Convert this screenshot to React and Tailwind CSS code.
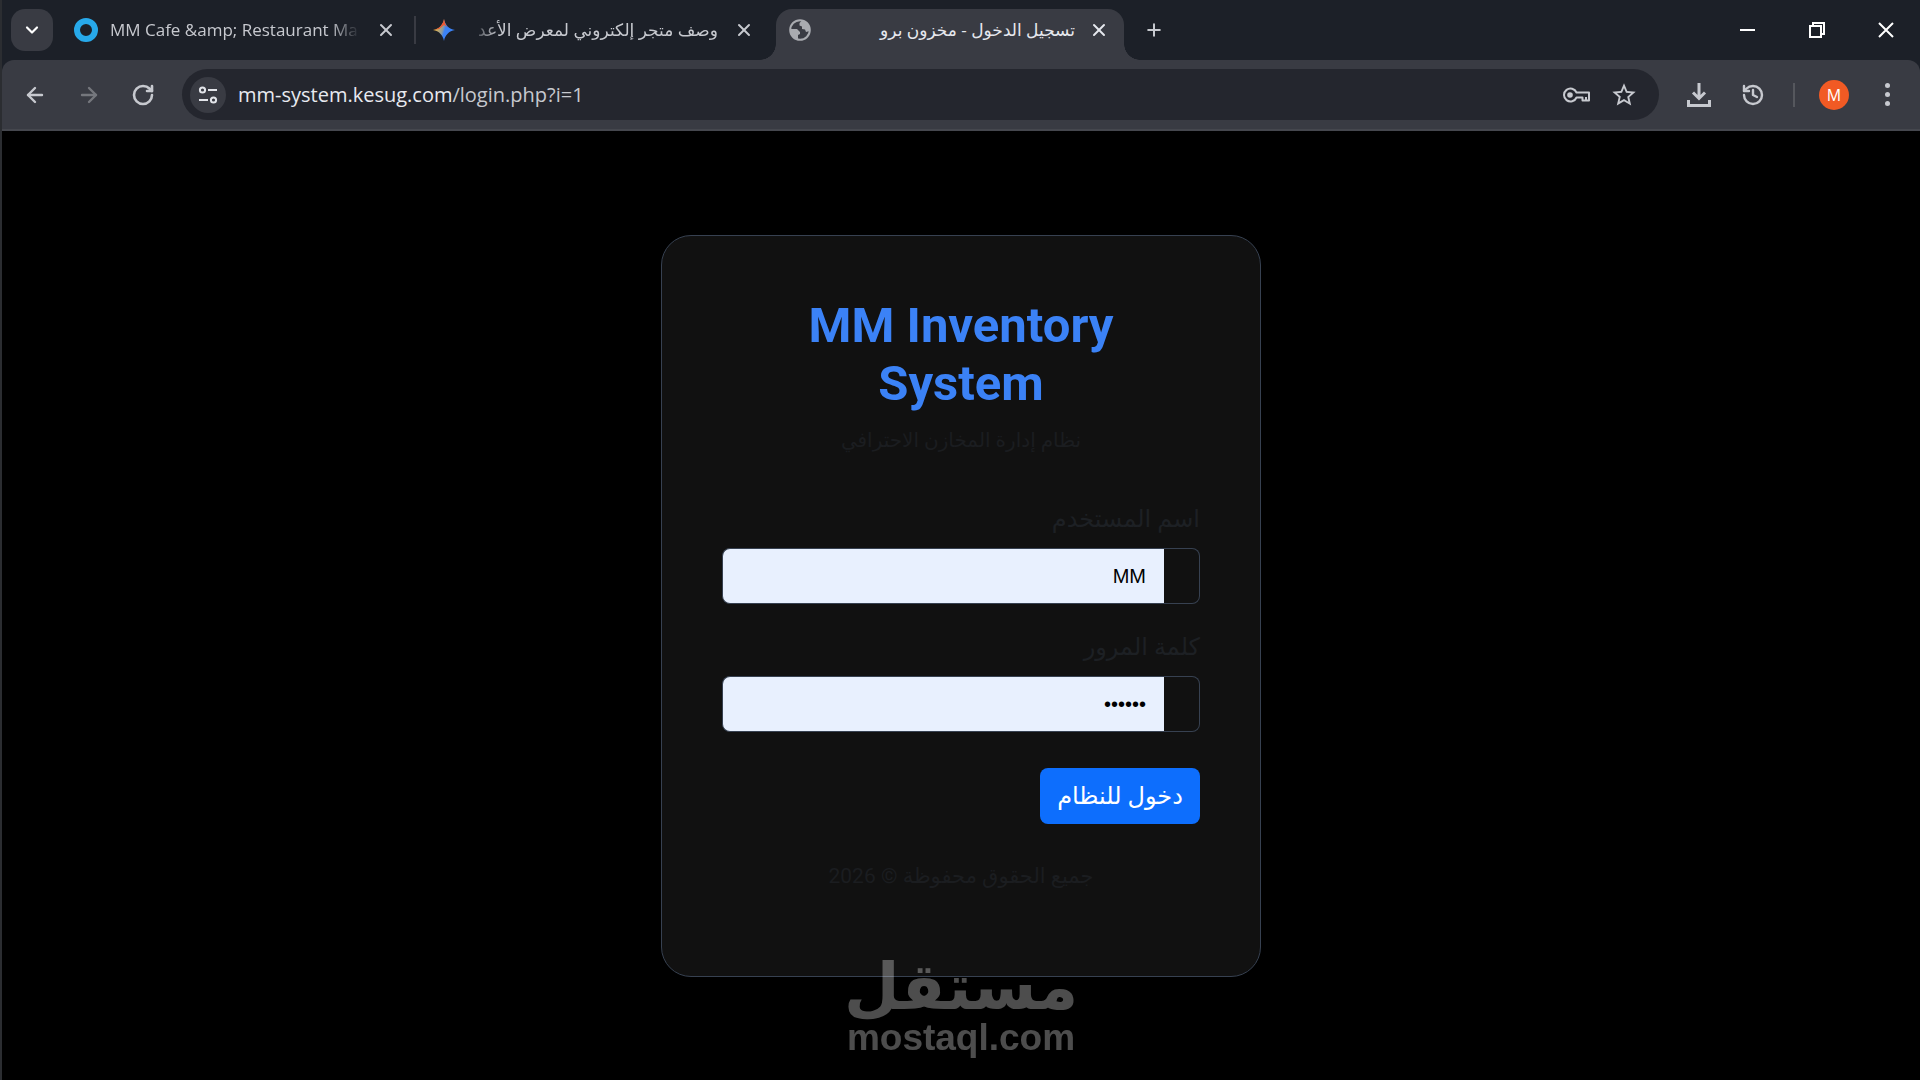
import { useState } from 'react';
import { ArrowLeft, ArrowRight, ChevronDown, History, Plus, RotateCw, X } from 'lucide-react';
import { MdStarBorder } from 'react-icons/md';

function GeminiIcon() {
  return (
    <svg viewBox="0 0 24 24" className="size-6 shrink-0">
      <defs>
        <linearGradient id="spark" x1="0" y1="0.3" x2="1" y2="0.6">
          <stop offset="0.1" stopColor="#f2b53a" />
          <stop offset="0.45" stopColor="#8a9aa0" />
          <stop offset="0.55" stopColor="#3b82f6" />
          <stop offset="1" stopColor="#3b82f6" />
        </linearGradient>
      </defs>
      <path d="M12 1c1 6 5 10 11 11-6 1-10 5-11 11-1-6-5-10-11-11 6-1 10-5 11-11Z" fill="url(#spark)" />
      <path d="M12 1c1 6 3 8 5 9l-5-3-5 4-6 1c6-1 10-5 11-11Z" fill="#f0562f" />
    </svg>
  );
}

function GlobeIcon() {
  return (
    <svg viewBox="0 0 24 24" className="ml-3 size-6 shrink-0 text-[#a9abb0]">
      <circle cx="12" cy="12" r="9.8" fill="none" stroke="currentColor" strokeWidth="2" />
      <path
        d="M14 2.500 11.500 5v2.500l2.500 1v2.500l3 .5 1 2.500 3.500-1 .5-3-2.500-5Z M2 11h7l3 3v2l-2 1v4.500l-4-1.500-3.500-4Z"
        fill="currentColor"
      />
    </svg>
  );
}

function TuneIcon() {
  return (
    <svg viewBox="0 0 20 20" className="size-5" fill="none" stroke="#e3e5ea" strokeWidth="2">
      <circle cx="4.5" cy="5" r="2.6" />
      <path d="M10 5h9M1 15h9" />
      <circle cx="15.5" cy="15" r="2.6" />
    </svg>
  );
}

function KeyIcon() {
  return (
    <svg viewBox="0 0 28 20" className="h-5 w-7" fill="none" stroke="currentColor" strokeWidth="2">
      <path d="M14.500 7.500h12.500v8h-6.500v-3h-6a6.500 6.500 0 1 1 0-5Z" strokeLinejoin="round" />
      <path d="M24 12v3" />
      <circle cx="8" cy="10" r="2.800" fill="currentColor" stroke="none" />
    </svg>
  );
}

function TabTitle({ children, rtl, className }) {
  return (
    <span dir={rtl ? 'rtl' : 'ltr'} className={`h-7 overflow-hidden whitespace-nowrap text-[17px] leading-7 ${className}`}>
      {children}
    </span>
  );
}

function CloseTab() {
  return (
    <button aria-label="Close tab" className="flex size-6 shrink-0 items-center justify-center">
      <X className="size-5" strokeWidth={2.4} />
    </button>
  );
}

function TabStrip() {
  return (
    <div className="flex h-15 items-center bg-[#1c2028] text-[#c7c9cf]">
      <button aria-label="Search tabs" className="ml-[9px] flex size-[42px] items-center justify-center rounded-[14px] bg-[#393b43] text-white">
        <ChevronDown className="size-5" strokeWidth={2.6} />
      </button>

      <div className="ml-[21px] flex w-[342px] items-center border-r-2 border-[#393b43]">
        <span className="size-6 shrink-0 rounded-full border-[6px] border-[#27a9ea]" />
        <TabTitle className="ml-3 w-[250px] mask-r-from-88%">MM Cafe &amp;amp; Restaurant Ma</TabTitle>
        <span className="ml-3.5 flex"><CloseTab /></span>
      </div>

      <div className="ml-4 flex w-[344px] items-center">
        <GeminiIcon />
        <TabTitle rtl className="ml-3 w-[250px] mask-l-from-88%">وصف متجر إلكتروني لمعرض الأعد</TabTitle>
        <span className="ml-3.5 flex"><CloseTab /></span>
      </div>

      <div className="relative mt-[9px] flex h-[51px] w-[348px] items-center rounded-t-2xl bg-[#393b43] pb-[9px] text-[#e6e8ee]">
        <span className="absolute -left-4 bottom-0 size-4 bg-[radial-gradient(circle_at_0_0,transparent_15.5px,#393b43_16px)]" />
        <span className="absolute -right-4 bottom-0 size-4 bg-[radial-gradient(circle_at_100%_0,transparent_15.5px,#393b43_16px)]" />
        <GlobeIcon />
        <TabTitle rtl className="ml-3 w-[251px]">تسجيل الدخول - مخزون برو</TabTitle>
        <span className="ml-3 flex"><CloseTab /></span>
      </div>

      <button aria-label="New tab" className="ml-[18px] flex size-6 items-center justify-center">
        <Plus className="size-5" strokeWidth={2.4} />
      </button>

      <div className="ml-auto flex h-full text-white">
        <button aria-label="Minimize" className="flex w-[69px] items-center justify-center">
          <span className="h-0.5 w-[15px] bg-white" />
        </button>
        <button aria-label="Restore" className="flex w-[69px] items-center justify-center">
          <svg viewBox="0 0 16 16" className="size-4" fill="none" stroke="currentColor" strokeWidth="2">
            <path d="M4 4V1h11v11h-3M1 4h11v11H1Z" />
          </svg>
        </button>
        <button aria-label="Close" className="flex w-[69px] items-center justify-center">
          <svg viewBox="0 0 16 16" className="size-4" fill="none" stroke="currentColor" strokeWidth="2">
            <path d="M1 1l14 14M15 1L1 15" />
          </svg>
        </button>
      </div>
    </div>
  );
}

function Toolbar() {
  return (
    <div className="bg-[#1c2028]">
      <div className="flex h-[71px] items-center rounded-t-xl border-b-2 border-[#45474e] bg-[#393b43] text-[#c7c9cf]">
        <div className="flex w-[180px] items-center gap-[30px] pl-[21px]">
          <button aria-label="Back"><ArrowLeft className="size-6" strokeWidth={2.4} /></button>
          <button aria-label="Forward" className="text-[#75777d]"><ArrowRight className="size-6" strokeWidth={2.4} /></button>
          <button aria-label="Reload"><RotateCw className="size-6" strokeWidth={2.6} /></button>
        </div>

        <div className="flex h-[51px] flex-1 items-center rounded-full bg-[#24262e] pl-2 pr-[21px]">
          <button aria-label="Site information" className="flex size-9 items-center justify-center rounded-full bg-[#393b43]">
            <TuneIcon />
          </button>
          <div dir="ltr" className="ml-3 flex-1 text-xl text-[#c7c9cf]">
            <span className="text-[#e8eaf0]">mm-system.kesug.com</span>/login.php?i=1
          </div>
          <button aria-label="Passwords"><KeyIcon /></button>
          <button aria-label="Bookmark" className="ml-5"><MdStarBorder className="size-7" /></button>
        </div>

        <div className="flex w-[261px] items-center pl-[26px]">
          <button aria-label="Downloads">
            <svg viewBox="0 0 28 28" className="size-7" fill="none" stroke="currentColor" strokeWidth="3">
              <path d="M14 2v15M8 11.500l6 6 6-6M3.500 19v5.500h21V19" />
            </svg>
          </button>
          <button aria-label="History" className="ml-7"><History className="size-6" strokeWidth={2.4} /></button>
          <span className="ml-7 h-6 w-0.5 bg-[#55575d]" />
          <button aria-label="Profile" className="ml-6 size-[30px] rounded-full bg-[#f15a24] text-base text-white">M</button>
          <button aria-label="Menu" className="ml-9 flex w-[5px] flex-col gap-1">
            <span className="size-[5px] rounded-full bg-current" />
            <span className="size-[5px] rounded-full bg-current" />
            <span className="size-[5px] rounded-full bg-current" />
          </button>
        </div>
      </div>
    </div>
  );
}

function Field({ id, label, type, value, onChange }) {
  return (
    <div className="mb-7">
      <label htmlFor={id} className="mb-3.5 block text-2xl leading-[30px] text-[#1d2024]">{label}</label>
      <div className="flex h-14">
        <span className="w-9 shrink-0 rounded-r-lg border border-l-0 border-[#374151]" />
        <input
          id={id}
          type={type}
          value={value}
          onChange={(e) => onChange(e.target.value)}
          className="min-w-0 flex-1 rounded-l-lg border border-r-0 border-[#374151] bg-[#e8f0fe] px-[18px] font-['Liberation_Sans',sans-serif] text-xl text-black outline-none"
        />
      </div>
    </div>
  );
}

export default function App() {
  const [username, setUsername] = useState('MM');
  const [password, setPassword] = useState('123456');

  const handleSubmit = (e) => {
    e.preventDefault();
  };

  return (
    <div className="flex min-h-screen flex-col border-l-2 border-[#2b2d31] bg-black font-['Open_Sans','DejaVu_Sans',sans-serif]">
      <header>
        <TabStrip />
        <Toolbar />
      </header>

      <main dir="rtl" className="relative flex flex-1 items-start justify-center pt-26 font-['Roboto','DejaVu_Sans',sans-serif]">
        <div className="w-[600px] rounded-[30px] border border-[#374151] bg-[#111111] px-15 pt-[61px] pb-15">
          <h1 dir="ltr" className="text-center text-[49px] leading-[58px] font-bold text-[#3b82f6]">
            MM Inventory<br />System
          </h1>
          <p className="mt-[11px] mb-12 text-center text-xl leading-8 text-[#1b1d20]">نظام إدارة المخازن الاحترافي</p>

          <form onSubmit={handleSubmit}>
            <Field id="username" label="اسم المستخدم" type="text" value={username} onChange={setUsername} />
            <Field id="password" label="كلمة المرور" type="password" value={password} onChange={setPassword} />
            <button type="submit" className="mt-2 h-14 w-40 rounded-lg bg-[#0d6efd] text-2xl text-white">
              دخول للنظام
            </button>
          </form>

          <p className="mt-9 mb-6 text-center text-[21px] leading-8 text-[#1b1d20]">جميع الحقوق محفوظة © 2026</p>
        </div>

        <div className="absolute inset-x-0 bottom-5 flex flex-col items-center font-bold text-white opacity-30">
          <span className="text-[64px] leading-14">مستقل</span>
          <span dir="ltr" className="font-['Liberation_Sans',sans-serif] text-[37px] leading-11">mostaql.com</span>
        </div>
      </main>
    </div>
  );
}
